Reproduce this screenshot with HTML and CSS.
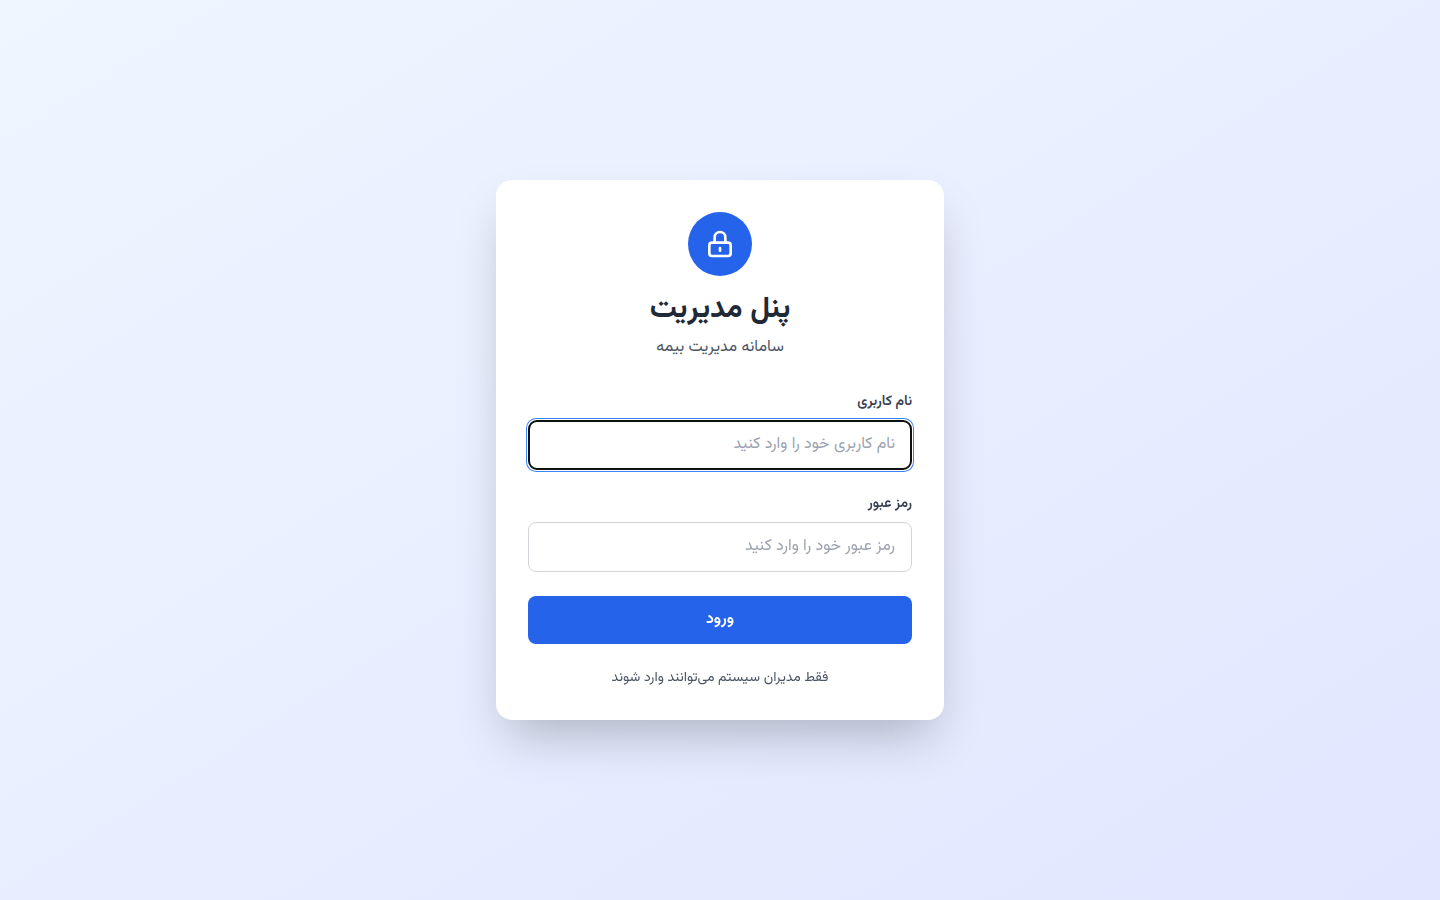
FILE: index.html
```
<!DOCTYPE html>
<html lang="fa" dir="rtl">
<head>
    <meta charset="UTF-8">
    <meta name="viewport" content="width=device-width, initial-scale=1.0">
    <title>پنل مدیریت</title>
    <link rel="stylesheet" href="styles.css">
</head>
<body>
    <main class="login-card">
        <div class="login-header">
            <div class="logo">
                <svg class="logo-icon" viewBox="0 0 24 24" fill="none" stroke="currentColor" stroke-width="2" stroke-linecap="round" stroke-linejoin="round" aria-hidden="true">
                    <path d="M12 15v2m-6 4h12a2 2 0 002-2v-6a2 2 0 00-2-2H6a2 2 0 00-2 2v6a2 2 0 002 2zm10-10V7a4 4 0 00-8 0v4h8z"/>
                </svg>
            </div>
            <h1>پنل مدیریت</h1>
            <p class="subtitle">سامانه مدیریت بیمه</p>
        </div>

        <form class="login-form">
            <div class="field">
                <label for="username">نام کاربری</label>
                <input type="text" id="username" name="username" placeholder="نام کاربری خود را وارد کنید" autocomplete="off" required autofocus>
            </div>
            <div class="field">
                <label for="password">رمز عبور</label>
                <input type="password" id="password" name="password" placeholder="رمز عبور خود را وارد کنید" required>
            </div>
            <button type="submit">ورود</button>
        </form>

        <p class="note">فقط مدیران سیستم می‌توانند وارد شوند</p>
    </main>
</body>
</html>
```

FILE: styles.css
```
:root {
    --blue: #2563eb;
    --light-blue: #3b82f6;
    --dark: #1f2937;
    --text: #374151;
    --muted: #4b5563;
    --placeholder: #9ca3af;
    --border: #d1d5db;
}

* {
    box-sizing: border-box;
}

body {
    font-family: Vazirmatn, "DejaVu Sans", sans-serif;
    font-size: 16px;
    line-height: 24px;
    background: linear-gradient(to bottom right, #eff6ff, #e0e7ff);
    color: var(--dark);
    display: flex;
    justify-content: center;
    align-items: center;
    min-height: 100vh;
    margin: 0;
    padding: 16px;
}

h1, p {
    margin: 0;
}

.login-card {
    background-color: #fff;
    border-radius: 16px;
    box-shadow: 0 25px 50px -12px rgba(0, 0, 0, 0.25);
    padding: 32px;
    width: 100%;
    max-width: 448px;
}

.login-header {
    text-align: center;
    margin-bottom: 32px;
}

.logo {
    display: flex;
    justify-content: center;
    align-items: center;
    width: 64px;
    height: 64px;
    margin: 0 auto 16px;
    border-radius: 50%;
    background-color: var(--blue);
    color: #fff;
}

.logo-icon {
    width: 32px;
    height: 32px;
}

h1 {
    font-size: 30px;
    line-height: 36px;
    font-weight: 700;
}

.subtitle {
    margin-top: 8px;
    color: var(--muted);
}

.login-form {
    display: flex;
    flex-direction: column;
    gap: 24px;
}

label {
    display: block;
    margin-bottom: 8px;
    font-size: 14px;
    line-height: 20px;
    font-weight: 600;
    color: var(--text);
}

input {
    display: block;
    width: 100%;
    padding: 12px 16px;
    border: 1px solid var(--border);
    border-radius: 8px;
    background-color: #fff;
    font: inherit;
    color: var(--dark);
}

input:focus {
    border-color: transparent;
    box-shadow: 0 0 0 2px var(--light-blue);
}

input::placeholder {
    color: var(--placeholder);
}

button {
    width: 100%;
    padding: 12px 16px;
    border: none;
    border-radius: 8px;
    background-color: var(--blue);
    color: #fff;
    font: inherit;
    font-weight: 600;
    cursor: pointer;
}

button:hover {
    background-color: #1d4ed8;
}

.note {
    margin-top: 24px;
    text-align: center;
    font-size: 14px;
    line-height: 20px;
    color: var(--muted);
}
```
